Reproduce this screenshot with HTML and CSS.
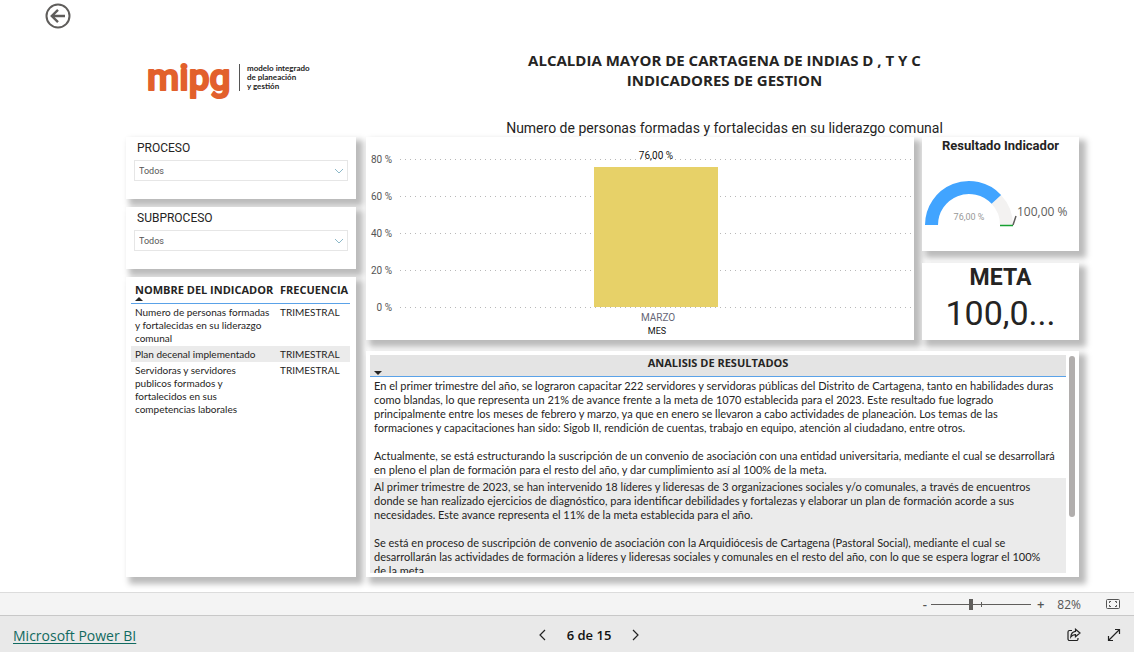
FILE: index.html
```html
<!DOCTYPE html>
<html lang="es">
<head>
<meta charset="utf-8">
<title>Indicadores de gestión</title>
<link rel="stylesheet" href="styles.css">
</head>
<body>
<main class="report">
  <nav class="rail">
    <button class="back" aria-label="Atrás">
      <svg width="26" height="26" viewBox="0 0 26 26" fill="none" stroke="#5f5d5b"><circle cx="13" cy="13" r="11.5" stroke-width="2"/><path d="M20 13H7.5M13 6.800L6.800 13l6.200 6.200" stroke-width="2.400"/></svg>
    </button>
  </nav>
  <section class="column filters">
    <div class="brand">
      <svg class="brand-name" width="84" height="52" viewBox="0 0 84 52" role="img" aria-label="mipg"><text x="0" y="38">mipg</text></svg>
      <p class="brand-tag">modelo integrado<br>de planeación<br>y gestión</p>
    </div>
    <div class="card slicer">
      <label for="proceso">PROCESO</label>
      <div class="picker">
        <select id="proceso"><option>Todos</option></select>
        <svg width="10" height="6" viewBox="0 0 10 6"><path d="M1 1l4 4 4-4"/></svg>
      </div>
    </div>
    <div class="card slicer">
      <label for="subproceso">SUBPROCESO</label>
      <div class="picker">
        <select id="subproceso"><option>Todos</option></select>
        <svg width="10" height="6" viewBox="0 0 10 6"><path d="M1 1l4 4 4-4"/></svg>
      </div>
    </div>
    <div class="card list">
      <table class="indicators">
        <thead><tr><th>NOMBRE DEL INDICADOR<svg class="sort" width="8" height="4" viewBox="0 0 8 4"><path d="M0 4l4-4 4 4z"/></svg></th><th>FRECUENCIA</th></tr></thead>
        <tbody>
          <tr><td>Numero de personas formadas<br>y fortalecidas en su liderazgo<br>comunal</td><td>TRIMESTRAL</td></tr>
          <tr class="alt"><td>Plan decenal implementado</td><td>TRIMESTRAL</td></tr>
          <tr><td>Servidoras y servidores<br>publicos formados y<br>fortalecidos en sus<br>competencias laborales</td><td>TRIMESTRAL</td></tr>
        </tbody>
      </table>
    </div>
  </section>
  <section class="column results">
    <header class="heading">
      <h1>ALCALDIA MAYOR DE CARTAGENA DE INDIAS D , T Y C<br>INDICADORES DE GESTION</h1>
      <h2>Numero de personas formadas y fortalecidas en su liderazgo comunal</h2>
    </header>
    <div class="visuals">
      <div class="card chart">
        <svg viewBox="0 0 548 202" role="img" aria-label="Resultado por mes">
          <g class="grid"><path d="M34 22.500H548M34 59.500H548M34 96.500H548M34 133.500H548M34 170.500H548"/></g>
          <rect x="228" y="30" width="124" height="140" fill="#e7d168"/>
          <g class="axis">
            <text x="26" y="26">80 %</text><text x="26" y="63">60 %</text><text x="26" y="100">40 %</text><text x="26" y="137">20 %</text><text x="26" y="174">0 %</text>
          </g>
          <g class="mid">
            <text class="value" x="290" y="22">76,00 %</text>
            <text class="month" x="292" y="184">MARZO</text>
            <text class="value axis-title" x="291" y="197">MES</text>
          </g>
        </svg>
      </div>
      <div class="side">
        <div class="card gauge">
          <h3>Resultado Indicador</h3>
          <svg viewBox="0 0 157 66" role="img" aria-label="76,00 % de 100,00 %">
            <path fill="#f3f2f1" d="M79 31.900A44 44 0 0 1 91 62H78A31 31 0 0 0 69.600 40.800z"/>
            <path fill="#41a4ff" d="M3 62A44 44 0 0 1 79.100 31.900L69.600 40.800A31 31 0 0 0 16 62z"/>
            <path d="M78 62.500h13" stroke="#16a031" stroke-width="1.500"/>
            <path d="M91 62l3-9" stroke="#605e5c" stroke-width="1.500" fill="none"/>
            <text class="now" x="47" y="57">76,00 %</text>
            <text class="goal" x="95" y="53">100,00 %</text>
          </svg>
        </div>
        <div class="card meta">
          <h3>META</h3>
          <p>100,0...</p>
        </div>
      </div>
    </div>
    <div class="card analysis">
      <div class="scroll">
        <table>
          <thead><tr><th>ANALISIS DE RESULTADOS<svg class="sort" width="8" height="4" viewBox="0 0 8 4"><path d="M0 0l4 4 4-4z"/></svg></th></tr></thead>
          <tbody>
            <tr><td>En el primer trimestre del año, se lograron capacitar 222 servidores y servidoras públicas del Distrito de Cartagena, tanto en habilidades duras<br>como blandas, lo que representa un 21% de avance frente a la meta de 1070 establecida para el 2023. Este resultado fue logrado<br>principalmente entre los meses de febrero y marzo, ya que en enero se llevaron a cabo actividades de planeación. Los temas de las<br>formaciones y capacitaciones han sido: Sigob II, rendición de cuentas, trabajo en equipo, atención al ciudadano, entre otros.<br><br>Actualmente, se está estructurando la suscripción de un convenio de asociación con una entidad universitaria, mediante el cual se desarrollará<br>en pleno el plan de formación para el resto del año, y dar cumplimiento así al 100% de la meta.</td></tr>
            <tr class="alt"><td>Al primer trimestre de 2023, se han intervenido 18 líderes y lideresas de 3 organizaciones sociales y/o comunales, a través de encuentros<br>donde se han realizado ejercicios de diagnóstico, para identificar debilidades y fortalezas y elaborar un plan de formación acorde a sus<br>necesidades. Este avance representa el 11% de la meta establecida para el año.<br><br>Se está en proceso de suscripción de convenio de asociación con la Arquidiócesis de Cartagena (Pastoral Social), mediante el cual se<br>desarrollarán las actividades de formación a líderes y lideresas sociales y comunales en el resto del año, con lo que se espera lograr el 100%<br>de la meta.</td></tr>
          </tbody>
        </table>
      </div>
      <div class="thumb"></div>
    </div>
  </section>
</main>
<div class="zoombar">
  <button class="step" aria-label="Alejar">-</button>
  <input type="range" min="0" max="100" value="40" aria-label="Zoom">
  <button class="step" aria-label="Acercar">+</button>
  <span class="percent">82%</span>
  <button class="fit" aria-label="Ajustar a la página">
    <svg width="14" height="10" viewBox="0 0 14 10" fill="none" stroke="#555"><rect x=".5" y=".5" width="13" height="9" rx="1"/><path d="M5 2.500H3.500V4M9 2.500h1.500V4M5 7.500H3.500V6M9 7.500h1.500V6"/></svg>
  </button>
</div>
<footer class="footer">
  <a href="#">Microsoft Power BI</a>
  <div class="pager">
    <button aria-label="Anterior"><svg width="7" height="12" viewBox="0 0 7 12"><path d="M6 1L1 6l5 5"/></svg></button>
    <span>6 de 15</span>
    <button aria-label="Siguiente"><svg width="7" height="12" viewBox="0 0 7 12"><path d="M1 1l5 5-5 5"/></svg></button>
  </div>
  <div class="actions">
    <button aria-label="Compartir"><svg width="14" height="14" viewBox="0 0 14 14"><path d="M5 2.500H2.500a1.500 1.500 0 0 0-1.500 1.500v7a1.500 1.500 0 0 0 1.500 1.500h7a1.500 1.500 0 0 0 1.500-1.500V10M8.500 1.200L13 5 8.500 8.700V6.600C6.300 6.500 5 7.300 3.800 9c.2-3 1.700-5.200 4.700-5.600z"/></svg></button>
    <button aria-label="Pantalla completa"><svg width="14" height="14" viewBox="0 0 14 14"><path d="M1.500 12.500l11-11M8 1.500h4.500V6M1.500 8v4.500H6"/></svg></button>
  </div>
</footer>
</body>
</html>
```
FILE: styles.css
```css
* { box-sizing: border-box; }
body {
  margin: 0;
  min-height: 100vh;
  display: flex;
  flex-direction: column;
  background: #fff;
  color: #252423;
  font-family: "Open Sans", "Noto Sans", sans-serif;
  font-size: 11px;
}
h1, h2, h3, p { margin: 0; }
button { border: 0; padding: 0; background: none; font: inherit; color: inherit; display: flex; }
table { border-collapse: collapse; width: 100%; }
td, th { text-align: left; vertical-align: top; white-space: nowrap; }
td { font-family: Lato, sans-serif; }

.report {
  flex: 1;
  display: grid;
  grid-template-columns: 82px 230fr 713fr;
  column-gap: 10px;
  padding: 0 55px 15px 34px;
}
.rail { padding: 3px 0 0 11px; }
.column { display: flex; flex-direction: column; min-width: 0; }
.card {
  background: #fff;
  box-shadow: 5px 5px 6px 2px rgba(0, 0, 0, .27);
}

.filters { gap: 8px; }
.brand { height: 129px; display: flex; align-items: center; gap: 8px; padding: 26px 0 0 21px; }
.brand-name { overflow: visible; }
.brand-name text {
  font: 500 37px Roboto, sans-serif;
  fill: #e2602c;
  stroke: #e2602c;
  stroke-width: 2;
  stroke-linejoin: round;
}
.brand-tag {
  border-left: 1px solid #555;
  padding-left: 7px;
  font: 700 8px/9px Lato, sans-serif;
}

.slicer { height: 62px; padding: 4px 8px 0; }
.slicer label { display: block; padding-left: 3px; font: 12px/14px Roboto, sans-serif; }
.picker { position: relative; margin-top: 5px; }
.picker select {
  appearance: none;
  display: block;
  width: 100%;
  height: 21px;
  border: 1px solid #e6e6e6;
  border-radius: 0;
  padding: 1px 4px 0;
  background: #fff;
  color: #555;
  font: 9px Roboto, sans-serif;
}
.picker svg { position: absolute; right: 4px; top: 8px; fill: none; stroke: #8db9c9; }

.list { flex: 1; padding: 5px 6px 0 5px; }
.indicators { font-size: 10px; line-height: 13px; }
.indicators th { font-size: 11px; line-height: 15px; padding: 0 0 2px 4px; border-bottom: 1px solid #5aa2e8; }
.indicators td { padding: 2px 0 1px 4px; }
.indicators td + td, .indicators th + th { padding-left: 5px; width: 75px; }
.sort { display: block; fill: #252423; }
.alt { background: #ebebeb; }

.heading { height: 137px; padding: 50px 0 0 4px; text-align: center; }
.heading h1 { font-size: 15px; line-height: 20px; font-weight: 700; }
.heading h2 { margin-top: 30px; font: 14px/16px Roboto, sans-serif; }
.visuals { display: grid; grid-template-columns: 548fr 157fr; gap: 8px; }
.chart svg, .gauge svg { display: block; width: 100%; }
.grid path { stroke: #b8b8b8; stroke-dasharray: 1 4; }
.axis, .mid { font: 10px Roboto, sans-serif; fill: #555; text-anchor: end; }
.mid { text-anchor: middle; }
.value { fill: #111; }
.axis-title { font-size: 9px; }
.month { fill: #667; }
.side { display: flex; flex-direction: column; gap: 12px; }
.gauge { height: 114px; }
.gauge h3 { font: 700 13px/18px Roboto, sans-serif; text-align: center; padding-bottom: 8px; }
.now { font: 9px Roboto, sans-serif; fill: #999; text-anchor: middle; }
.goal { font: 12px "Open Sans", sans-serif; fill: #605e5c; }
.meta { height: 77px; text-align: center; }
.meta h3 { font: 700 23px/30px Roboto, sans-serif; }
.meta p { font: 34px/40px Roboto, sans-serif; }

.analysis { margin-top: 11px; flex: 1 1 226px; padding: 4px; display: flex; gap: 3px; }
.scroll { flex: 1; min-width: 0; height: 218px; overflow: hidden; }
.scroll table { line-height: 14px; }
.scroll th { text-align: center; line-height: 16px; padding: 0 4px 1px; background: #e4e4e4; border-bottom: 1px solid #5aa2e8; }
.scroll td { padding: 2px 0 1px 4px; }
.thumb { width: 6px; height: 161px; margin-top: 1px; border-radius: 3px; background: #b1aead; }

.zoombar {
  height: 23px;
  display: flex;
  align-items: center;
  justify-content: flex-end;
  padding: 0 14px;
  background: #f4f4f4;
  border-top: 1px solid #dcdcdc;
  color: #555;
}
.step { font-size: 13px; font-weight: 600; }
.zoombar input {
  appearance: none;
  width: 100px;
  height: 12px;
  margin: 0 6px 0 4px;
  background:
    linear-gradient(#605e5c, #605e5c) 50px 50% / 1px 5px no-repeat,
    linear-gradient(#605e5c, #605e5c) 0 50% / 100% 1px no-repeat;
}
.zoombar input::-webkit-slider-thumb { appearance: none; width: 4px; height: 11px; background: #605e5c; }
.percent { font-size: 12px; margin: 0 25px 0 13px; }

.footer {
  height: 37px;
  display: grid;
  grid-template-columns: 1fr auto 1fr;
  align-items: center;
  padding: 2px 13px 0 13px;
  background: #e9e9e9;
  border-top: 1px solid #c8c8c8;
}
.footer a { color: #116a60; font-size: 14px; text-underline-offset: 2px; }
.footer path { fill: none; stroke: #222; stroke-width: 1.200; }
.pager { display: flex; align-items: center; gap: 21px; padding-left: 44px; font-size: 13px; font-weight: 600; color: #111; }
.actions { display: flex; justify-content: flex-end; gap: 26px; }
```
